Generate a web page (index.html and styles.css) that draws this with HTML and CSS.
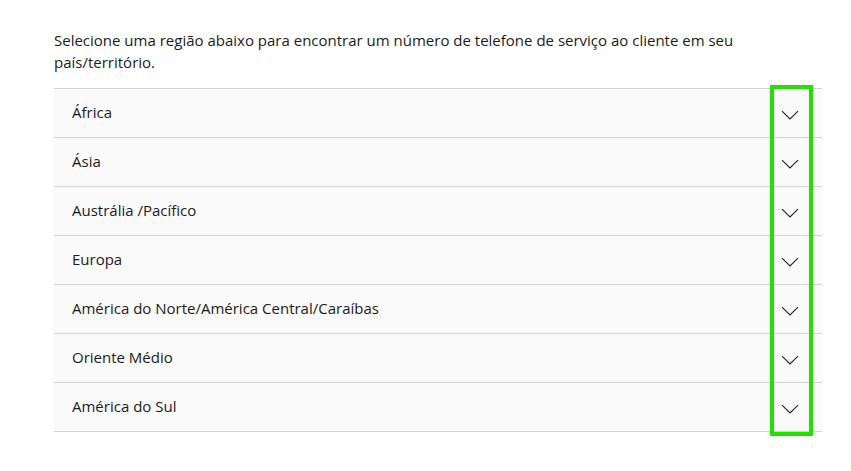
FILE: index.html
```
<!DOCTYPE html>
<html lang="pt">
<head>
<meta charset="utf-8">
<link rel="stylesheet" href="styles.css">
</head>
<body>
<main class="page">
  <p class="intro">Selecione uma região abaixo para encontrar um número de telefone de serviço ao cliente em seu país/território.</p>
  <div class="accordion">
    <div class="highlight"></div>
    <div class="row"><span class="label">África</span><svg class="chev" viewBox="0 0 18 10" width="18" height="10"><path d="M1 1.2 L9 9 L17 1.2" fill="none" stroke="#222" stroke-width="1.1"/></svg></div>
    <div class="row"><span class="label">Ásia</span><svg class="chev" viewBox="0 0 18 10" width="18" height="10"><path d="M1 1.2 L9 9 L17 1.2" fill="none" stroke="#222" stroke-width="1.1"/></svg></div>
    <div class="row"><span class="label">Austrália /Pacífico</span><svg class="chev" viewBox="0 0 18 10" width="18" height="10"><path d="M1 1.2 L9 9 L17 1.2" fill="none" stroke="#222" stroke-width="1.1"/></svg></div>
    <div class="row"><span class="label">Europa</span><svg class="chev" viewBox="0 0 18 10" width="18" height="10"><path d="M1 1.2 L9 9 L17 1.2" fill="none" stroke="#222" stroke-width="1.1"/></svg></div>
    <div class="row"><span class="label">América do Norte/América Central/Caraíbas</span><svg class="chev" viewBox="0 0 18 10" width="18" height="10"><path d="M1 1.2 L9 9 L17 1.2" fill="none" stroke="#222" stroke-width="1.1"/></svg></div>
    <div class="row"><span class="label">Oriente Médio</span><svg class="chev" viewBox="0 0 18 10" width="18" height="10"><path d="M1 1.2 L9 9 L17 1.2" fill="none" stroke="#222" stroke-width="1.1"/></svg></div>
    <div class="row"><span class="label">América do Sul</span><svg class="chev" viewBox="0 0 18 10" width="18" height="10"><path d="M1 1.2 L9 9 L17 1.2" fill="none" stroke="#222" stroke-width="1.1"/></svg></div>
  </div>
</main>
</body>
</html>
```
FILE: styles.css
```
html, body {
  margin: 0;
  padding: 0;
  background: #ffffff;
}
body {
  font-family: "Open Sans", "Noto Sans", "Liberation Sans", sans-serif;
  color: #1b1b1b;
}
.page {
  padding: 29px 29px 39px 54px;
}
.intro {
  margin: 0 0 15px 0;
  font-size: 15px;
  line-height: 22px;
  max-width: 700px;
}
.accordion {
  position: relative;
  width: 768px;
  border-top: 1px solid #d2d2d2;
}
.row {
  display: flex;
  align-items: center;
  justify-content: space-between;
  height: 48px;
  padding: 0 23px 0 18px;
  background: #fafafa;
  border-bottom: 1px solid #d2d2d2;
  font-size: 15px;
}
.label {
  margin-top: -2px;
}
.chev {
  display: block;
  margin-top: 3px;
}
.highlight {
  position: absolute;
  left: 716px;
  top: -4px;
  width: 35px;
  height: 343px;
  border: 4px solid #22e000;
  pointer-events: none;
  z-index: 2;
}
```
